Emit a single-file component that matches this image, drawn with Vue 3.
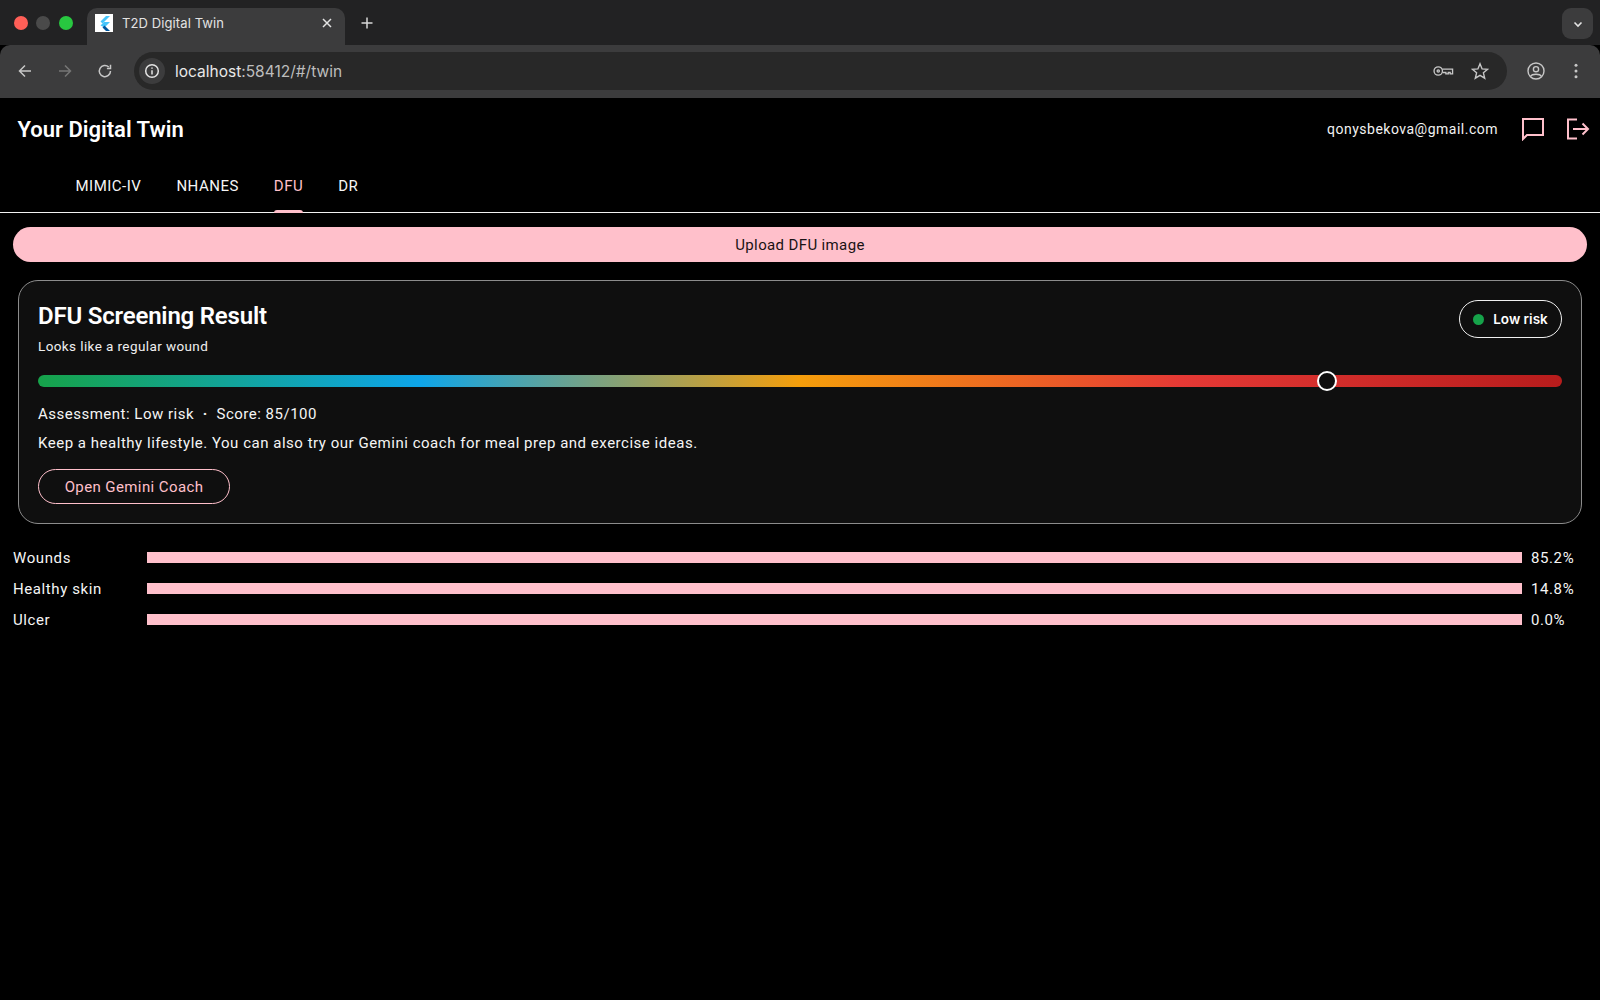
<template>
  <div class="page">
    <div class="tabstrip">
      <div class="lights">
        <span class="light red"></span>
        <span class="light grey"></span>
        <span class="light green"></span>
      </div>
      <div class="tab">
        <svg class="favicon" viewBox="0 0 18 18">
          <rect width="18" height="18" fill="#fff" />
          <path d="M11 2 L15 2 L7.5 9.5 L5.5 7.5 Z" fill="#47c5fb" />
          <path d="M5.5 11.5 L9 8 L15 8 L9.5 13.5 Z" fill="#47c5fb" />
          <path d="M7.5 13.5 L9.5 11.5 L15 17 L11 17 Z" fill="#00569e" />
        </svg>
        <span class="tab-title">T2D Digital Twin</span>
        <svg class="tab-close" viewBox="0 0 12 12">
          <path d="M2 2 L10 10 M10 2 L2 10" />
        </svg>
      </div>
      <svg class="new-tab" viewBox="0 0 14 14">
        <path d="M7 1.5 V12.5 M1.5 7 H12.5" />
      </svg>
      <div class="tab-menu">
        <svg viewBox="0 0 12 12"><path d="M2.5 4.5 L6 8 L9.5 4.5" /></svg>
      </div>
    </div>
    <div class="toolbar">
      <svg class="nav-icon" viewBox="0 0 16 16"><path d="M14 8 H2.5 M8 2.5 L2.5 8 L8 13.5" /></svg>
      <svg class="nav-icon off" viewBox="0 0 16 16"><path d="M2 8 H13.5 M8 2.5 L13.5 8 L8 13.5" /></svg>
      <svg class="nav-icon" viewBox="0 0 16 16"><path d="M13.5 8 A5.6 5.6 0 1 1 11.8 4 M13.5 1.8 V5.4 H9.9" /></svg>
      <div class="omnibox">
        <span class="site-info">
          <svg viewBox="0 0 16 16">
            <circle cx="8" cy="8" r="6.3" />
            <path d="M8 7.2 V11.6 M8 4.4 V5.8" />
          </svg>
        </span>
        <span class="url">localhost<span class="url-dim">:58412/#/twin</span></span>
        <svg class="omni-icon key" viewBox="0 0 22 14">
          <circle cx="5.5" cy="7" r="4.4" />
          <circle cx="5.5" cy="7" r="1.2" />
          <path d="M9.9 5 H20.5 V10 H18 V8.6 H16 V10 H13.5 V8.6 H9.9" />
        </svg>
        <svg class="omni-icon star" viewBox="0 0 18 18">
          <path d="M9 1.8 L11.1 6.9 L16.6 7.3 L12.4 10.8 L13.7 16.2 L9 13.3 L4.3 16.2 L5.6 10.8 L1.4 7.3 L6.9 6.9 Z" />
        </svg>
      </div>
      <svg class="profile" viewBox="0 0 18 18">
        <circle cx="9" cy="9" r="8" />
        <circle cx="9" cy="7.2" r="2.6" />
        <path d="M3.6 14.4 C5 11.6 13 11.6 14.4 14.4" />
      </svg>
      <svg class="dots" viewBox="0 0 4 16">
        <circle cx="2" cy="2.2" r="1.5" />
        <circle cx="2" cy="8" r="1.5" />
        <circle cx="2" cy="13.8" r="1.5" />
      </svg>
    </div>

    <div class="app">
      <header class="appbar">
        <h1 class="app-title">Your Digital Twin</h1>
        <div class="appbar-right">
          <span class="email">qonysbekova@gmail.com</span>
          <svg class="bar-icon chat" viewBox="0 0 24 24">
            <path d="M2 2 H22 V18 H6 L2 22 Z" />
          </svg>
          <svg class="bar-icon logout" viewBox="0 0 24 24">
            <path d="M11 2.5 H2 V21.5 H11 M7 12 H22 M16.5 6.5 L22 12 L16.5 17.5" />
          </svg>
        </div>
      </header>

      <nav class="tabs">
        <a
          v-for="t in tabs"
          :key="t"
          class="nav-tab"
          :class="{ active: t === 'DFU' }"
        >{{ t }}</a>
      </nav>

      <button class="upload">Upload DFU image</button>

      <section class="card">
        <div class="card-head">
          <div>
            <h2 class="card-title">DFU Screening Result</h2>
            <p class="card-sub">Looks like a regular wound</p>
          </div>
          <div class="risk-pill">
            <span class="risk-dot"></span>
            Low risk
          </div>
        </div>
        <div class="meter">
          <span class="thumb" :style="{ left: thumbPos + '%' }"></span>
        </div>
        <p class="assess">Assessment: Low risk <span class="sep">·</span> Score: 85/100</p>
        <p class="advice">Keep a healthy lifestyle. You can also try our Gemini coach for meal prep and exercise ideas.</p>
        <button class="coach">Open Gemini Coach</button>
      </section>

      <div class="probs">
        <div v-for="p in probs" :key="p.label" class="prob-row">
          <span class="prob-label">{{ p.label }}</span>
          <span class="prob-bar"></span>
          <span class="prob-val">{{ p.value }}</span>
        </div>
      </div>
    </div>
  </div>
</template>

<script setup>
const tabs = ['MIMIC-IV', 'NHANES', 'DFU', 'DR'];
const thumbPos = 84.6;
const probs = [
  { label: 'Wounds', value: '85.2%' },
  { label: 'Healthy skin', value: '14.8%' },
  { label: 'Ulcer', value: '0.0%' }
];
</script>

<style>
html,
body {
  margin: 0;
  background: #000;
}
</style>

<style scoped>
.page {
  width: 1600px;
  height: 1000px;
  overflow: hidden;
  background: #000;
  color: #fff;
  font-family: Roboto, "Liberation Sans", sans-serif;
}

.tabstrip {
  height: 45px;
  box-sizing: border-box;
  padding-top: 8px;
  background: #222223;
  display: flex;
  align-items: flex-start;
}
.lights {
  display: flex;
  gap: 8.3px;
  padding: 8px 0 0 14px;
  width: 73px;
  box-sizing: border-box;
}
.light {
  width: 14px;
  height: 14px;
  border-radius: 50%;
}
.light.red { background: #ff5f57; }
.light.grey { background: #4a4a4a; }
.light.green { background: #28c840; }
.tab {
  margin-left: 14px;
  width: 258px;
  height: 37px;
  box-sizing: border-box;
  padding: 0 12px 8px 8px;
  background: #3c3c3d;
  border-radius: 10px 10px 0 0;
  display: flex;
  align-items: center;
}
.favicon {
  width: 18px;
  height: 18px;
  flex: none;
}
.tab-title {
  margin-left: 9px;
  flex: 1;
  font-family: Inter, Roboto, sans-serif;
  font-size: 13px;
  letter-spacing: 0.1px;
  color: #e3e3e3;
}
.tab-close {
  width: 12px;
  height: 12px;
  fill: none;
  stroke: #e3e3e3;
  stroke-width: 1.5;
}
.new-tab {
  width: 14px;
  height: 14px;
  margin: 8px 0 0 15px;
  fill: none;
  stroke: #d8d8d8;
  stroke-width: 1.5;
}
.tab-menu {
  margin: 0 7px 0 auto;
  width: 31px;
  height: 31px;
  border-radius: 9px;
  background: #3c3c3d;
  display: flex;
  align-items: center;
  justify-content: center;
}
.tab-menu svg {
  width: 12px;
  height: 12px;
  fill: none;
  stroke: #e3e3e3;
  stroke-width: 1.6;
}

.toolbar {
  height: 53px;
  box-sizing: border-box;
  background: #3c3c3d;
  border-radius: 10px 10px 0 0;
  display: flex;
  align-items: center;
  padding: 0 0 1px 17px;
}
.nav-icon {
  width: 16px;
  height: 16px;
  margin-right: 24px;
  fill: none;
  stroke: #c7c7c7;
  stroke-width: 1.5;
  flex: none;
}
.nav-icon.off {
  stroke: #767676;
}
.omnibox {
  margin-left: -3px;
  width: 1373px;
  height: 38px;
  border-radius: 19px;
  background: #282828;
  display: flex;
  align-items: center;
  padding: 0 18px 0 5px;
  box-sizing: border-box;
  flex: none;
}
.site-info {
  width: 26px;
  height: 26px;
  border-radius: 50%;
  background: #3c3c3d;
  display: flex;
  align-items: center;
  justify-content: center;
}
.site-info svg {
  width: 16px;
  height: 16px;
  fill: none;
  stroke: #e3e3e3;
  stroke-width: 1.5;
}
.url {
  margin-left: 10px;
  font-family: Inter, Roboto, sans-serif;
  font-size: 15.5px;
  color: #e8e8e8;
  flex: 1;
}
.url-dim {
  color: #bdbdbd;
}
.omni-icon {
  fill: none;
  stroke: #c7c7c7;
  stroke-width: 1.4;
}
.omni-icon.key {
  width: 21px;
  height: 14px;
  margin-right: 17px;
}
.omni-icon.star {
  width: 18px;
  height: 18px;
}
.profile {
  width: 18px;
  height: 18px;
  margin-left: 20px;
  fill: none;
  stroke: #c7c7c7;
  stroke-width: 1.4;
}
.dots {
  width: 4px;
  height: 16px;
  margin-left: 29px;
  fill: #c7c7c7;
}

.appbar {
  height: 64px;
  display: flex;
  align-items: center;
  padding: 0 10px 0 17.5px;
}
.app-title {
  margin: 0 0 2px;
  font-size: 22px;
  font-weight: 600;
  flex: 1;
}
.appbar-right {
  display: flex;
  align-items: center;
  padding-bottom: 2px;
}
.email {
  font-size: 14px;
  letter-spacing: 0.5px;
  color: #f2f2f2;
  margin-right: 23px;
}
.bar-icon {
  width: 24px;
  height: 24px;
  fill: none;
  stroke: #ffc0cb;
  stroke-width: 2;
}
.bar-icon.chat {
  margin-right: 21px;
}
.tabs {
  height: 51px;
  box-sizing: border-box;
  display: flex;
  gap: 35px;
  padding-left: 75.5px;
  border-bottom: 1px solid #f2f2f2;
}
.nav-tab {
  position: relative;
  font-size: 15px;
  line-height: 48px;
  height: 50px;
  color: #f5f5f5;
  letter-spacing: 0.5px;
}
.nav-tab.active {
  color: #ffc0cb;
}
.nav-tab.active::after {
  content: "";
  position: absolute;
  left: 0;
  right: 0;
  bottom: -1px;
  height: 3px;
  border-radius: 3px 3px 0 0;
  background: #ffc0cb;
}

.upload {
  display: block;
  margin: 14px 13px 0;
  width: 1574px;
  height: 35px;
  border: 0;
  border-radius: 18px;
  background: #ffc0cb;
  color: #1a1214;
  font-family: inherit;
  font-size: 15px;
  letter-spacing: 0.37px;
}

.card {
  margin: 18px 18px 0;
  height: 244px;
  box-sizing: border-box;
  padding: 20px 19px 0;
  background: #0f0f0f;
  border: 1px solid #8c8c8c;
  border-radius: 20px;
}
.card-head {
  display: flex;
  justify-content: space-between;
  align-items: flex-start;
  margin-top: -1px;
}
.card-title {
  margin: 1px 0 0;
  font-size: 24px;
  line-height: 30px;
  font-weight: 600;
  letter-spacing: -0.2px;
}
.card-sub {
  margin: 7px 0 0;
  font-size: 13.5px;
  line-height: 16px;
  letter-spacing: 0.4px;
  color: #f0f0f0;
}
.risk-pill {
  width: 103px;
  height: 38px;
  box-sizing: border-box;
  border: 1px solid #f0f0f0;
  border-radius: 19px;
  display: flex;
  align-items: center;
  justify-content: center;
  gap: 9px;
  font-family: Inter, Roboto, sans-serif;
  font-size: 13.5px;
  font-weight: 600;
}
.risk-dot {
  width: 11px;
  height: 11px;
  border-radius: 50%;
  background: #16a34a;
}
.meter {
  position: relative;
  height: 12px;
  margin-top: 21px;
  border-radius: 6px;
  background: linear-gradient(90deg, #16a34a 0%, #0ea5e9 25%, #f59e0b 50%, #e53935 75%, #b71c1c 100%);
}
.thumb {
  position: absolute;
  top: 50%;
  width: 20px;
  height: 20px;
  box-sizing: border-box;
  margin: -10px 0 0 -10px;
  border: 2.5px solid #fff;
  border-radius: 50%;
  background: #0f0f0f;
}
.assess {
  margin: 17px 0 0;
  font-size: 15px;
  line-height: 20px;
  letter-spacing: 0.5px;
  color: #f5f5f5;
}
.sep {
  font-weight: 700;
  margin: 0 4.5px;
}
.advice {
  margin: 9px 0 0;
  font-size: 15px;
  line-height: 20px;
  letter-spacing: 0.52px;
  color: #f5f5f5;
}
.coach {
  display: block;
  margin-top: 16px;
  width: 192px;
  height: 35px;
  border: 1px solid #ffc0cb;
  border-radius: 18px;
  background: transparent;
  color: #ffc0cb;
  font-family: inherit;
  font-size: 15px;
  letter-spacing: 0.4px;
}

.probs {
  margin-top: 24px;
  padding: 0 13px;
  display: flex;
  flex-direction: column;
  gap: 11px;
}
.prob-row {
  display: flex;
  align-items: center;
  height: 20px;
  font-size: 15px;
  letter-spacing: 0.6px;
  color: #f5f5f5;
}
.prob-label {
  width: 134px;
}
.prob-bar {
  width: 1375px;
  height: 11px;
  margin-top: -2px;
  background: #ffc0cb;
}
.prob-val {
  margin-left: 9px;
}
</style>
